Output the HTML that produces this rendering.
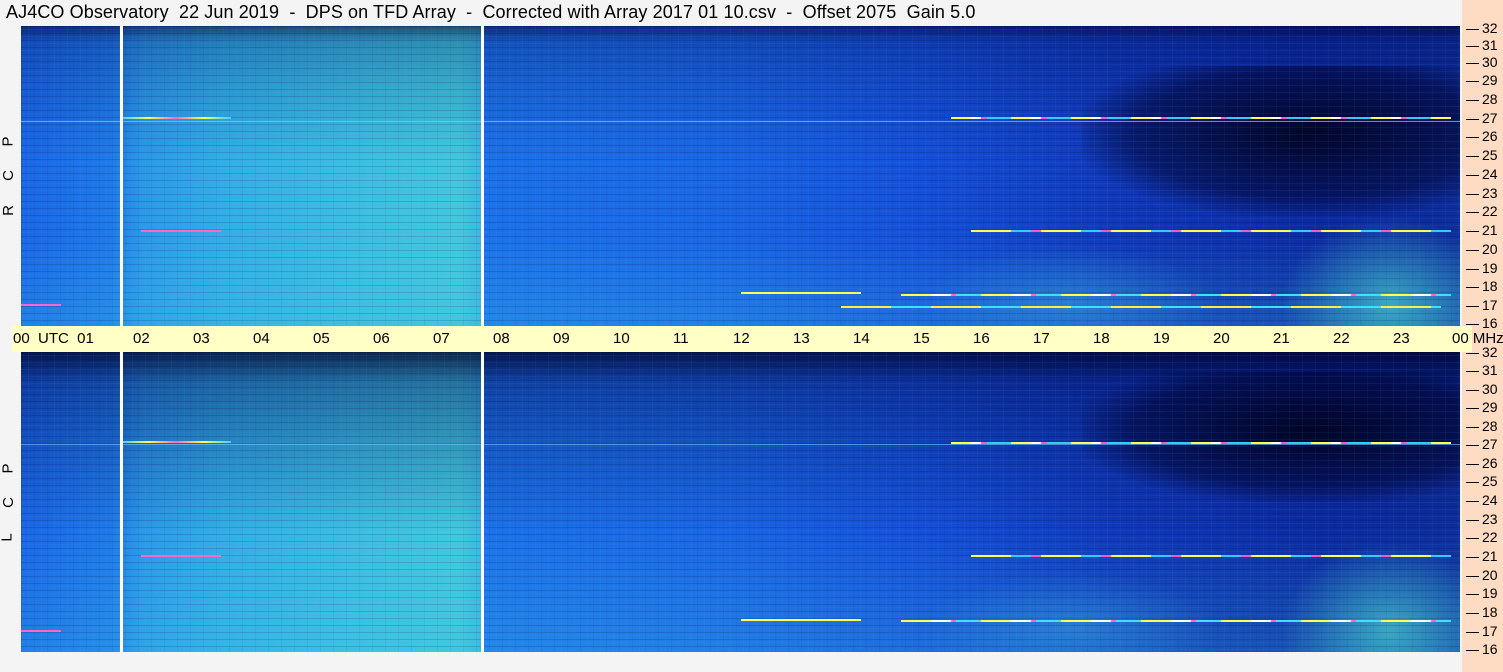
<!DOCTYPE html>
<html><head><meta charset="utf-8"><style>
body{margin:0;width:1503px;height:672px;background:#f4f4f4;position:relative;overflow:hidden;font-family:"Liberation Sans",sans-serif}
.title{position:absolute;left:6px;top:2px;font-size:18px;color:#000;white-space:pre;letter-spacing:0.1px}
.rp{position:absolute;left:1462px;top:0;width:41px;height:672px;background:#fddcc3}
.axis{position:absolute;left:12px;top:326px;width:1460px;height:26px;background:#ffffc6}
.plot{position:absolute;left:21px;width:1439px;height:300px;overflow:hidden}
.base{position:absolute;inset:0;background:linear-gradient(90deg,#1a66e6 0px,#1f7ae8 90px,#2c98e8 120px,#32aee6 200px,#3cbee2 330px,#42c8dc 440px,#3ab8e0 460px,#1c72e8 462px,#1a66e4 700px,#1550d8 900px,#1038b8 1100px,#0c2aa0 1300px,#0e2e9c 1439px)}
.v{position:absolute;inset:0;background:linear-gradient(180deg,rgba(0,0,40,.6) 0%,rgba(0,10,80,.3) 5%,rgba(0,10,80,.15) 20%,rgba(0,0,0,0) 45%,rgba(60,200,230,.0) 70%,rgba(60,200,230,.25) 100%)}
.stripes{position:absolute;inset:0;background:repeating-linear-gradient(180deg,rgba(0,0,60,.15) 0 1px,rgba(0,0,0,0) 1px 3px,rgba(80,160,255,.08) 3px 4px,rgba(0,0,0,0) 4px 7px)}
.vs{position:absolute;inset:0;background:repeating-linear-gradient(90deg,rgba(0,0,60,.05) 0 1px,rgba(0,0,0,0) 1px 7px,rgba(100,180,255,.05) 7px 8px,rgba(0,0,0,0) 8px 13px)}
.dark{position:absolute;left:1060px;top:40px;width:380px;height:150px;background:radial-gradient(ellipse at 60% 45%,rgba(0,0,20,.85),rgba(0,0,40,.5) 55%,rgba(0,0,0,0) 75%)}
.glow{position:absolute;left:1260px;top:190px;width:180px;height:110px;background:radial-gradient(ellipse at 60% 80%,rgba(80,230,210,.6),rgba(0,0,0,0) 70%)}
.glow2{position:absolute;left:900px;top:220px;width:300px;height:80px;background:radial-gradient(ellipse at 50% 70%,rgba(60,180,230,.4),rgba(0,0,0,0) 70%)}
.wl{position:absolute;top:0;width:3px;height:300px;background:#fff}
.ln{position:absolute;height:2px}
.tk{position:absolute;font-size:15px;color:#000;white-space:nowrap}
.rt{position:absolute;left:1466px;font-size:14px;color:#000;white-space:nowrap}
.rt:before{content:"";display:inline-block;width:13px;height:1px;background:#000;vertical-align:middle;margin-right:3px}
.lbl{position:absolute;left:3px;font-size:15px;transform:rotate(-90deg);color:#000}
</style></head><body>
<div class="title">AJ4CO Observatory  22 Jun 2019  -  DPS on TFD Array  -  Corrected with Array 2017 01 10.csv  -  Offset 2075  Gain 5.0</div>
<div class="rp"></div>
<div class="axis"></div>

<div class="plot" style="top:26px">
<div class="base"></div><div class="v"></div><div class="dark"></div><div class="glow"></div><div class="glow2"></div><div class="stripes"></div><div class="vs"></div>
<div class="ln" style="left:0;top:95px;width:1439px;height:1px;background:rgba(120,200,255,.7)"></div>
<div class="ln" style="left:100px;top:91px;width:110px;background:linear-gradient(90deg,#4cf,#ff4,#f6c,#ff4,#4cf)"></div>
<div class="ln" style="left:930px;top:91px;width:500px;background:repeating-linear-gradient(90deg,#ff5 0 20px,#fff 20px 30px,#f5c 30px 36px,#3cf 36px 60px)"></div>
<div class="ln" style="left:120px;top:204px;width:80px;background:#f6c"></div>
<div class="ln" style="left:950px;top:204px;width:480px;background:repeating-linear-gradient(90deg,#ff5 0 40px,#3cf 40px 60px,#f5c 60px 70px)"></div>
<div class="ln" style="left:720px;top:266px;width:120px;background:#ff5"></div>
<div class="ln" style="left:880px;top:268px;width:550px;background:repeating-linear-gradient(90deg,#ff5 0 30px,#fff 30px 50px,#f6c 50px 55px,#4df 55px 80px)"></div>
<div class="ln" style="left:0;top:278px;width:40px;background:#f6c"></div>
<div class="ln" style="left:820px;top:280px;width:600px;background:repeating-linear-gradient(90deg,#fe4 0 50px,#4df 50px 90px)"></div>
<div class="wl" style="left:99px"></div><div class="wl" style="left:460px"></div>
</div>

<div class="plot" style="top:352px">
<div class="base"></div><div class="v" style="background:linear-gradient(180deg,rgba(0,0,40,.8) 0%,rgba(0,10,80,.45) 10%,rgba(0,10,80,.25) 30%,rgba(0,0,0,0) 60%,rgba(60,200,230,.25) 100%)"></div><div class="dark" style="top:20px;height:130px"></div><div class="glow"></div><div class="glow2"></div><div class="stripes"></div><div class="vs"></div>
<div class="ln" style="left:0;top:92px;width:1439px;height:1px;background:rgba(120,200,255,.6)"></div>
<div class="ln" style="left:100px;top:89px;width:110px;background:linear-gradient(90deg,#4cf,#ff4,#f6c,#ff4,#4cf)"></div>
<div class="ln" style="left:930px;top:90px;width:500px;background:repeating-linear-gradient(90deg,#ff5 0 20px,#fff 20px 30px,#f5c 30px 36px,#3cf 36px 60px)"></div>
<div class="ln" style="left:120px;top:203px;width:80px;background:#f6c"></div>
<div class="ln" style="left:950px;top:203px;width:480px;background:repeating-linear-gradient(90deg,#ff5 0 40px,#3cf 40px 60px,#f5c 60px 70px)"></div>
<div class="ln" style="left:720px;top:267px;width:120px;background:#ff5"></div>
<div class="ln" style="left:880px;top:268px;width:550px;background:repeating-linear-gradient(90deg,#ff5 0 30px,#fff 30px 50px,#f6c 50px 55px,#4df 55px 80px)"></div>
<div class="ln" style="left:0;top:278px;width:40px;background:#f6c"></div>
<div class="wl" style="left:99px"></div><div class="wl" style="left:460px"></div>
</div>

<div class="tk" style="left:13px;top:330px">00&nbsp; UTC&nbsp; 01</div>
<div class="tk" style="left:133px;top:330px">02</div><div class="tk" style="left:193px;top:330px">03</div>
<div class="tk" style="left:253px;top:330px">04</div><div class="tk" style="left:313px;top:330px">05</div>
<div class="tk" style="left:373px;top:330px">06</div><div class="tk" style="left:433px;top:330px">07</div>
<div class="tk" style="left:493px;top:330px">08</div><div class="tk" style="left:553px;top:330px">09</div>
<div class="tk" style="left:613px;top:330px">10</div><div class="tk" style="left:673px;top:330px">11</div>
<div class="tk" style="left:733px;top:330px">12</div><div class="tk" style="left:793px;top:330px">13</div>
<div class="tk" style="left:853px;top:330px">14</div><div class="tk" style="left:913px;top:330px">15</div>
<div class="tk" style="left:973px;top:330px">16</div><div class="tk" style="left:1033px;top:330px">17</div>
<div class="tk" style="left:1093px;top:330px">18</div><div class="tk" style="left:1153px;top:330px">19</div>
<div class="tk" style="left:1213px;top:330px">20</div><div class="tk" style="left:1273px;top:330px">21</div>
<div class="tk" style="left:1333px;top:330px">22</div><div class="tk" style="left:1393px;top:330px">23</div>
<div class="tk" style="left:1452px;top:330px">00 MHz</div>

<div class="rt" style="top:20px">32</div><div class="rt" style="top:37px">31</div><div class="rt" style="top:54px">30</div><div class="rt" style="top:72px">29</div><div class="rt" style="top:91px">28</div><div class="rt" style="top:110px">27</div><div class="rt" style="top:128px">26</div><div class="rt" style="top:147px">25</div><div class="rt" style="top:166px">24</div><div class="rt" style="top:185px">23</div><div class="rt" style="top:203px">22</div><div class="rt" style="top:222px">21</div><div class="rt" style="top:241px">20</div><div class="rt" style="top:260px">19</div><div class="rt" style="top:278px">18</div><div class="rt" style="top:297px">17</div><div class="rt" style="top:315px">16</div>
<div class="rt" style="top:344px">32</div><div class="rt" style="top:362px">31</div><div class="rt" style="top:381px">30</div><div class="rt" style="top:399px">29</div><div class="rt" style="top:418px">28</div><div class="rt" style="top:436px">27</div><div class="rt" style="top:455px">26</div><div class="rt" style="top:473px">25</div><div class="rt" style="top:492px">24</div><div class="rt" style="top:511px">23</div><div class="rt" style="top:529px">22</div><div class="rt" style="top:548px">21</div><div class="rt" style="top:567px">20</div><div class="rt" style="top:585px">19</div><div class="rt" style="top:604px">18</div><div class="rt" style="top:623px">17</div><div class="rt" style="top:641px">16</div>

<div class="lbl" style="top:133px">P</div><div class="lbl" style="top:167px">C</div><div class="lbl" style="top:202px">R</div>
<div class="lbl" style="top:460px">P</div><div class="lbl" style="top:494px">C</div><div class="lbl" style="top:529px">L</div>
</body></html>
